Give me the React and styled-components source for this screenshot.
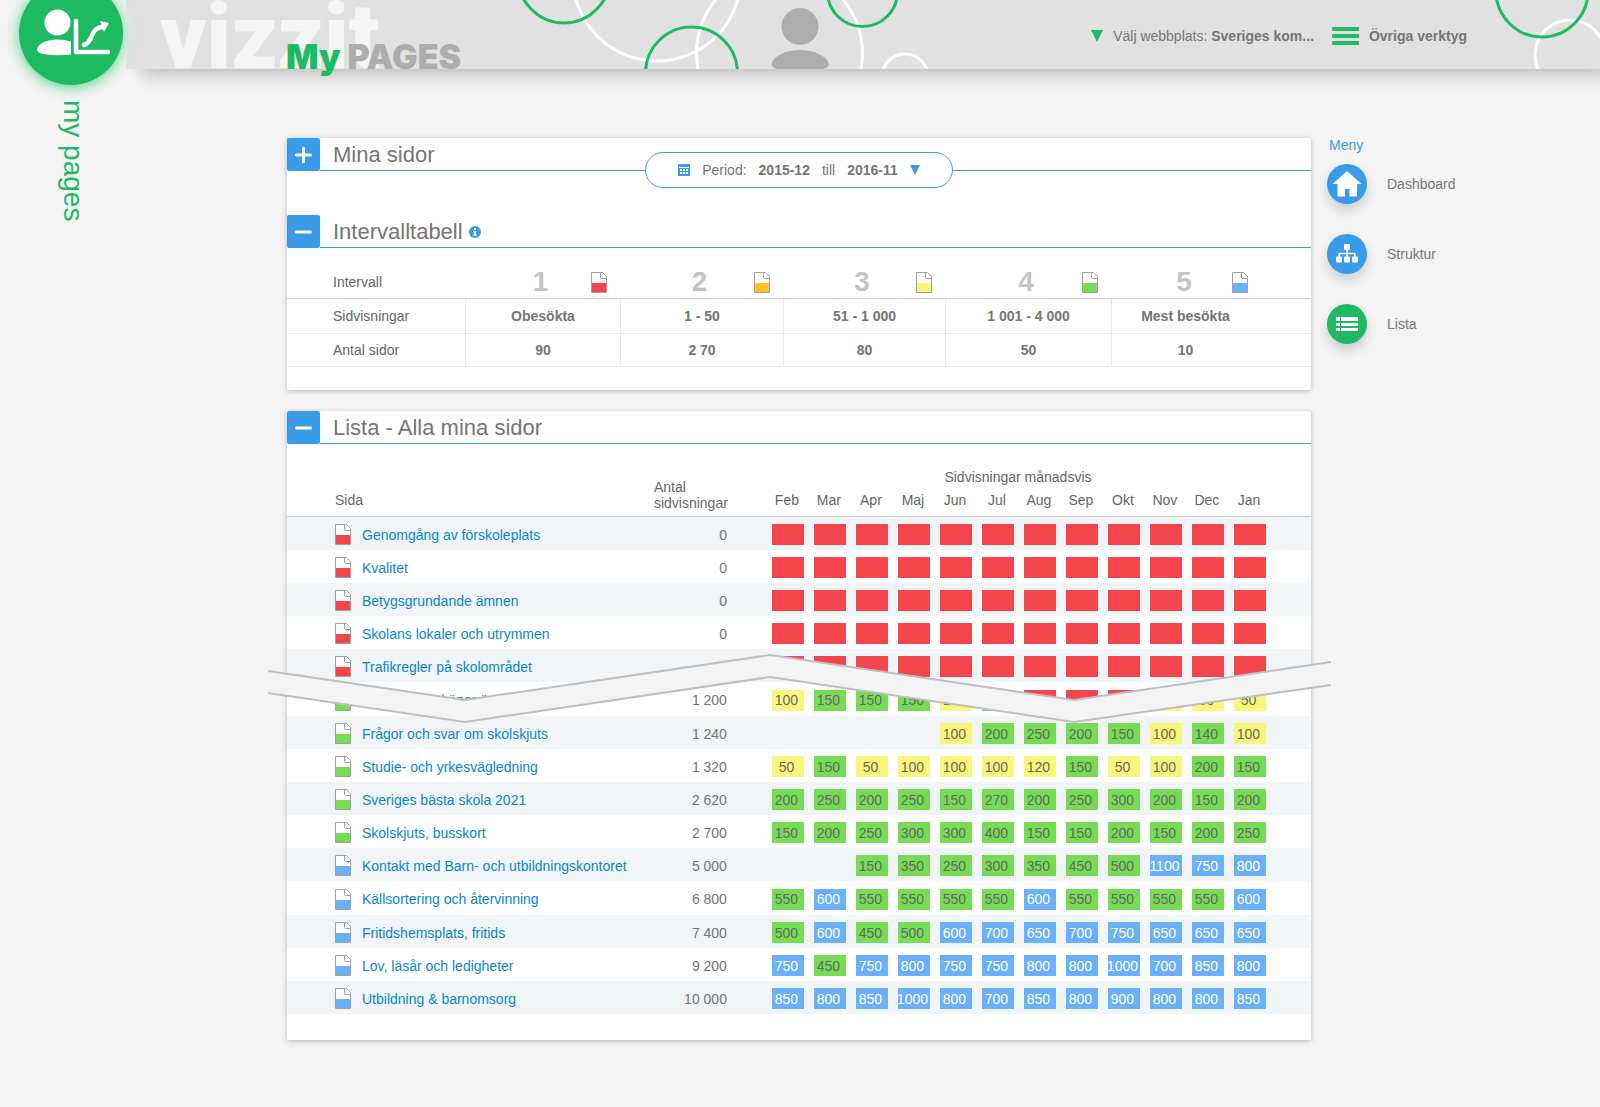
import React, { useState } from "react";
import styled, { createGlobalStyle } from "styled-components";

const GlobalStyle = createGlobalStyle`
  * {
    box-sizing: border-box;
  }
  body {
    margin: 0;
    background: #f4f4f4;
    color: #757575;
    font-family: "Liberation Sans", Arial, sans-serif;
    font-size: 14px;
    line-height: 16px;
  }
  button {
    padding: 0;
    border: 0;
    background: none;
    color: inherit;
    font: inherit;
    cursor: pointer;
  }
  a {
    color: inherit;
    text-decoration: none;
  }
  h1, h2, p {
    margin: 0;
  }
  svg {
    display: block;
  }
`;

const levels = {
  red: "#f5454c",
  orange: "#ffbd26",
  yellow: "#fbf67b",
  green: "#76dc54",
  blue: "#6ab0fa",
};

const Page = styled.div`
  display: grid;
  grid-template-columns: 142px minmax(0, 1fr);
  min-height: 100vh;
  align-content: start;
`;

const Rail = styled.aside`
  grid-column: 1;
  grid-row: 1 / 3;
  position: relative;
  z-index: 2;
  display: flex;
  flex-direction: column;
  align-items: center;
  margin-top: -19px;
  gap: 15px;
`;

const Badge = styled.a`
  display: flex;
  width: 104px;
  height: 104px;
  border-radius: 50%;
  background: #1dba62;
  box-shadow: 0 2px 14px rgba(29, 200, 100, 0.75), 0 0 6px 8px #f4f4f4;
`;

const RailLabel = styled.span`
  writing-mode: vertical-rl;
  padding-left: 3px;
  color: #1dba62;
  font-size: 28px;
  line-height: 32px;
`;

const Header = styled.header`
  grid-column: 1 / 3;
  grid-row: 1;
  position: relative;
  display: flex;
  justify-content: space-between;
  height: 69px;
  margin-left: 126px;
  padding: 0 133px 0 34px;
  background: #e1e1e1;
  box-shadow: 16px 8px 16px rgba(0, 0, 0, 0.17), 4px 8px 16px -8px rgba(0, 0, 0, 0.08);
`;

const HeaderArt = styled.svg`
  position: absolute;
  top: 0;
  right: 0;
  width: 100vw;
  height: 69px;
  pointer-events: none;
`;

const Brand = styled.div`
  position: relative;
  display: grid;
`;

const Logo = styled.span`
  position: absolute;
  bottom: 0;
  left: 0;
  color: #f5f5f5;
  font-family: Roboto, "Liberation Sans", sans-serif;
  font-size: 90px;
  font-weight: 900;
  line-height: 62px;
`;

const Title = styled.h1`
  position: relative;
  padding: 35px 0 0 126px;
  color: #adadad;
  font-family: Inter, "Liberation Sans", sans-serif;
  font-size: 34px;
  font-weight: 900;
  line-height: 44px;

  span {
    color: #1dba62;
  }
`;

const Tools = styled.nav`
  position: relative;
  display: flex;
  align-items: center;
  gap: 18px;
  padding-top: 3px;
`;

const Tool = styled.button`
  display: flex;
  align-items: center;
  gap: 10px;
  white-space: pre;
`;

const Content = styled.div`
  grid-column: 2;
  grid-row: 2;
  display: grid;
  grid-template-columns: minmax(0, 1fr) 289px;
  padding: 69px 0 64px 145px;
`;

const Panels = styled.main`
  display: flex;
  flex-direction: column;
  gap: 21px;
`;

const Panel = styled.section`
  position: relative;
  padding-bottom: 23px;
  border-radius: 2px;
  background: #fff;
  box-shadow: 0 1px 5px rgba(0, 0, 0, 0.25);
`;

const Section = styled.div`
  position: relative;
  margin-bottom: ${(props) => props.$gap || 0}px;
`;

const SectionBar = styled.div`
  display: flex;
  align-items: stretch;
  height: 33px;

  h2 {
    display: flex;
    flex: 1;
    align-items: center;
    gap: 6px;
    padding-top: 2px;
    padding-left: 13px;
    border-bottom: 1px solid #3a9be8;
    font-size: 22px;
    font-weight: 400;
    line-height: 26px;
  }
`;

const Expander = styled.button`
  display: grid;
  place-items: center;
  width: 33px;
  height: 33px;
  border-radius: 2px;
  background: #3a9be8;
`;

const PeriodRow = styled.div`
  position: absolute;
  top: 14px;
  right: 0;
  left: 0;
  display: flex;
  justify-content: center;
`;

const Period = styled.button`
  display: flex;
  align-items: center;
  gap: 12px;
  height: 36px;
  padding: 0 32px;
  border: 1px solid #3a9be8;
  border-radius: 18px;
  background: #fff;
`;

const Table = styled.table`
  width: 100%;
  table-layout: fixed;
  border-collapse: separate;
  border-spacing: 0;

  th,
  td {
    padding: 0;
  }
`;

const IntervalHead = styled.th`
  height: 51px;
  border-bottom: 1px solid #ccc;
  color: #666;
  font-weight: 400;
  text-align: left;
  padding-top: 18px !important;

  &:first-child {
    padding-left: 46px;
  }
  &:last-child {
    padding-right: 50px;
  }
`;

const IntervalMark = styled.div`
  display: grid;
  grid-template-columns: 1fr auto 1fr;
  align-items: center;
  padding-right: 13px;
  padding-left: 9px;
  color: #c4c4c4;
  font-size: 28px;
  font-weight: 700;
  line-height: 32px;

  b {
    grid-column: 2;
  }
  svg {
    justify-self: end;
  }
`;

const IntervalRow = styled.tr`
  height: ${(props) => props.$height}px;

  th,
  td {
    border-bottom: 1px solid #ebebeb;
  }
  th {
    padding-left: 46px;
    color: #666;
    font-weight: 400;
    text-align: left;
  }
  td {
    border-left: 1px solid #ebebeb;
    font-weight: 700;
    text-align: center;
  }
  td:last-child {
    padding-right: 52px;
  }
`;

const ListWrap = styled.div`
  position: relative;
  padding-bottom: 3px;
`;

const ListHead = styled.thead`
  color: #666;

  th {
    font-weight: 400;
    text-align: left;
    vertical-align: bottom;
  }
  tr:last-child th,
  th[rowspan] {
    border-bottom: 1px solid #ccc;
  }
  th[rowspan] {
    padding-bottom: 5px;
  }
  th[rowspan]:first-child {
    padding: 0 0 8px 48px;
  }
  tr:first-child {
    height: 48px;
  }
  tr:last-child {
    height: 25px;
  }
`;

const Months = styled.th`
  padding: 0 42px 7px 0 !important;
  text-align: center !important;
`;

const Month = styled.th`
  padding: 0 2px 8px 0 !important;
  text-align: center !important;

  &:last-child {
    padding-right: 42px !important;
  }
`;

const ListBody = styled.tbody`
  tr {
    height: 33px;
  }
  tr:nth-child(6n) {
    height: 34px;
  }
  tr:nth-child(odd) {
    background: #f1f5f8;
  }
  th,
  td {
    padding-top: 2px;
  }
  th {
    padding-left: 48px;
    color: #0787cc;
    font-weight: 400;
    text-align: left;
  }
`;

const PageLink = styled.a`
  display: flex;
  align-items: center;
  gap: 11px;
  white-space: nowrap;

  &:hover span {
    text-decoration: underline;
  }
`;

const Total = styled.td`
  padding-right: 40px !important;
  text-align: right;
`;

const ChipCell = styled.td`
  padding-left: 5px !important;
`;

const Chip = styled.span`
  display: flex;
  align-items: center;
  justify-content: center;
  width: 32px;
  height: 21px;
  padding-right: 3px;
  background: ${(props) => levels[props.$level]};
  color: ${(props) => (props.$level === "blue" ? "#fff" : "#666")};
`;

const Tear = styled.svg`
  position: absolute;
  top: 210px;
  left: -19px;
  width: calc(100% + 39px);
  height: 70px;
`;

const Menu = styled.nav`
  display: flex;
  flex-direction: column;
  align-items: flex-start;
  gap: 30px;
  padding-left: 16px;

  p {
    margin: -1px 0 -19px 2px;
    color: #3a9be8;
  }
`;

const MenuLink = styled.a`
  display: flex;
  align-items: center;
  gap: 20px;
`;

const Round = styled.span`
  display: grid;
  place-items: center;
  width: 40px;
  height: 40px;
  border-radius: 50%;
  background: ${(props) => (props.$active ? "#1dba62" : "#3a9be8")};
  box-shadow: 0 6px 12px rgba(0, 0, 0, 0.16);
`;

const FileIcon = ({ level }) => (
  <svg width="16" height="21" viewBox="0 0 16 21" fill="none">
    <path d="M.5 .5H11L15.500 5V20.500H.5Z" fill="#fff" />
    <path d="M1 11H15V20H1Z" fill={levels[level]} />
    <path
      d="M1 .5H11.500L15.500 4.500V20.500H.5V.5ZM9.500 .5V5.500Q9.500 6.500 10.500 6.500H15.500"
      stroke="#a0a0a0"
    />
  </svg>
);

const Triangle = ({ color, size }) => (
  <svg width={size} height={size} viewBox="0 0 12 12">
    <path d="M0 0H12L6 12Z" fill={color} />
  </svg>
);

const InfoIcon = () => (
  <svg width="12" height="12" viewBox="0 0 12 12">
    <circle cx="6" cy="6" r="6" fill="#3a9be8" />
    <path d="M5 2H7V4H5ZM4 5H7V8.500H8V9.700H4V8.500H5V6.200H4Z" fill="#fff" />
  </svg>
);

const CalendarIcon = () => (
  <svg width="12" height="12" viewBox="0 0 12 12">
    <path d="M0 0H12V12H0Z" fill="#3a9be8" />
    <path
      d="M2 5h2v2H2zM5 5h2v2H5zM8 5h2v2H8zM2 8h2v2H2zM5 8h2v2H5zM8 8h2v2H8z"
      fill="#fff"
    />
    <path d="M1 3.500H11" stroke="#fff" strokeWidth="1" />
  </svg>
);

const UserChartIcon = () => (
  <svg width="104" height="104" viewBox="19 -19 104 104">
    <circle cx="57.500" cy="22.500" r="13" fill="#fff" />
    <path
      d="M71 41.500V54.500Q64 55.200 57 55.200Q37 55 37 49.500C38 43 48 39.500 57 39.500Q65 39.500 71 41.500Z"
      fill="#fff"
    />
    <path
      d="M76 21V52H108"
      fill="none"
      stroke="#fff"
      strokeWidth="4.500"
      strokeLinecap="round"
      strokeLinejoin="round"
    />
    <path
      d="M84 45C94 42 89 29 102 27"
      fill="none"
      stroke="#fff"
      strokeWidth="4.500"
      strokeLinecap="round"
    />
    <path d="M100 21L109 23L104 32Z" fill="#fff" />
  </svg>
);

const HomeIcon = () => (
  <svg width="30" height="26" viewBox="0 0 30 26">
    <path
      d="M15 0L29.500 13H25V25.500H17.500V18H13V25.500H5.500V13H.5Z"
      fill="#fff"
    />
  </svg>
);

const TreeIcon = () => (
  <svg width="22" height="20" viewBox="0 0 22 20">
    <path d="M11 5V13M3.200 13V9.500H18.800V13" fill="none" stroke="#fff" strokeWidth="1.600" />
    <rect x="8" y="0" width="6" height="6" rx="1" fill="#fff" />
    <rect x="0" y="12.500" width="6" height="6" rx="1" fill="#fff" />
    <rect x="8" y="12.500" width="6" height="6" rx="1" fill="#fff" />
    <rect x="16" y="12.500" width="6" height="6" rx="1" fill="#fff" />
  </svg>
);

const ListIcon = () => (
  <svg width="22" height="14" viewBox="0 0 22 14">
    <path
      d="M0 0h4v4H0zM5 0h17v4H5zM0 6h4v3H0zM5 6h17v3H5zM0 11h4v3H0zM5 11h17v3H5z"
      fill="#fff"
    />
  </svg>
);

const BarsIcon = () => (
  <svg width="27" height="18" viewBox="0 0 27 18">
    <rect width="27" height="4" rx="1" fill="#1dba62" />
    <rect y="7" width="27" height="4" rx="1" fill="#1dba62" />
    <rect y="14" width="27" height="4" rx="1" fill="#1dba62" />
  </svg>
);

const ExpandIcon = ({ open }) => (
  <svg width="17" height="17" viewBox="0 0 17 17">
    <path
      d={open ? "M1.500 9H15.500" : "M1.500 9H15.500M8.500 2V16"}
      stroke="#fff"
      strokeWidth="3"
      strokeLinecap="round"
    />
  </svg>
);

const intervals = [
  { views: "Obesökta", pages: "90", level: "red" },
  { views: "1 - 50", pages: "2 70", level: "orange" },
  { views: "51 - 1 000", pages: "80", level: "yellow" },
  { views: "1 001 - 4 000", pages: "50", level: "green" },
  { views: "Mest besökta", pages: "10", level: "blue" },
];

const months = [
  "Feb", "Mar", "Apr", "Maj", "Jun", "Jul",
  "Aug", "Sep", "Okt", "Nov", "Dec", "Jan",
];

const none = Array(12).fill(0);

const pages = [
  ["red", "Genomgång av förskoleplats", "0", none],
  ["red", "Kvalitet", "0", none],
  ["red", "Betygsgrundande ämnen", "0", none],
  ["red", "Skolans lokaler och utrymmen", "0", none],
  ["red", "Trafikregler på skolområdet", "0", none],
  ["green", "Grundskola, köper än", "1 200", [100, 150, 150, 150, 100, 150, 0, 0, 0, 50, 60, 50]],
  ["green", "Frågor och svar om skolskjuts", "1 240", [null, null, null, null, 100, 200, 250, 200, 150, 100, 140, 100]],
  ["green", "Studie- och yrkesvägledning", "1 320", [50, 150, 50, 100, 100, 100, 120, 150, 50, 100, 200, 150]],
  ["green", "Sveriges bästa skola 2021", "2 620", [200, 250, 200, 250, 150, 270, 200, 250, 300, 200, 150, 200]],
  ["green", "Skolskjuts, busskort", "2 700", [150, 200, 250, 300, 300, 400, 150, 150, 200, 150, 200, 250]],
  ["blue", "Kontakt med Barn- och utbildningskontoret", "5 000", [null, null, 150, 350, 250, 300, 350, 450, 500, 1100, 750, 800]],
  ["blue", "Källsortering och återvinning", "6 800", [550, 600, 550, 550, 550, 550, 600, 550, 550, 550, 550, 600]],
  ["blue", "Fritidshemsplats, fritids", "7 400", [500, 600, 450, 500, 600, 700, 650, 700, 750, 650, 650, 650]],
  ["blue", "Lov, läsår och ledigheter", "9 200", [750, 450, 750, 800, 750, 750, 800, 800, 1000, 700, 850, 800]],
  ["blue", "Utbildning & barnomsorg", "10 000", [850, 800, 850, 1000, 800, 700, 850, 800, 900, 800, 800, 850]],
];

function levelOf(value) {
  if (value === 0) return "red";
  if (value <= 120) return "yellow";
  if (value < 600) return "green";
  return "blue";
}

function SectionHeader(props) {
  return (
    <SectionBar>
      <Expander
        aria-label={props.title}
        aria-expanded={props.open}
        onClick={props.onToggle}
      >
        <ExpandIcon open={props.open} />
      </Expander>
      <h2>
        {props.title}
        {props.info && <InfoIcon />}
      </h2>
    </SectionBar>
  );
}

function IntervalTable() {
  return (
    <Table>
      <colgroup>
        <col style={{ width: 178 }} />
        <col style={{ width: 155 }} />
        <col style={{ width: 163 }} />
        <col style={{ width: 162 }} />
        <col style={{ width: 166 }} />
        <col />
      </colgroup>
      <thead>
        <tr>
          <IntervalHead scope="col">Intervall</IntervalHead>
          {intervals.map((item, i) => (
            <IntervalHead scope="col" key={item.level}>
              <IntervalMark>
                <b>{i + 1}</b>
                <FileIcon level={item.level} />
              </IntervalMark>
            </IntervalHead>
          ))}
        </tr>
      </thead>
      <tbody>
        <IntervalRow $height={35}>
          <th scope="row">Sidvisningar</th>
          {intervals.map((item) => (
            <td key={item.level}>{item.views}</td>
          ))}
        </IntervalRow>
        <IntervalRow $height={33}>
          <th scope="row">Antal sidor</th>
          {intervals.map((item) => (
            <td key={item.level}>{item.pages}</td>
          ))}
        </IntervalRow>
      </tbody>
    </Table>
  );
}

function PageTable() {
  return (
    <ListWrap>
      <Table>
        <colgroup>
          <col />
          <col style={{ width: 113 }} />
          {months.map((month, i) => (
            <col key={month} style={{ width: i === 11 ? 82 : 42 }} />
          ))}
        </colgroup>
        <ListHead>
          <tr>
            <th rowSpan={2} scope="col">Sida</th>
            <th rowSpan={2} scope="col">
              Antal
              <br />
              sidvisningar
            </th>
            <Months colSpan={12} scope="colgroup">Sidvisningar månadsvis</Months>
          </tr>
          <tr>
            {months.map((month) => (
              <Month scope="col" key={month}>{month}</Month>
            ))}
          </tr>
        </ListHead>
        <ListBody>
          {pages.map(([level, name, total, values]) => (
            <tr key={name}>
              <th scope="row">
                <PageLink href="#">
                  <FileIcon level={level} />
                  <span>{name}</span>
                </PageLink>
              </th>
              <Total>{total}</Total>
              {values.map((value, i) => (
                <ChipCell key={months[i]}>
                  {value !== null && (
                    <Chip $level={levelOf(value)}>{value || ""}</Chip>
                  )}
                </ChipCell>
              ))}
            </tr>
          ))}
        </ListBody>
      </Table>
      {/* torn strip over the rows that are left out */}
      <Tear viewBox="0 0 1063 70" preserveAspectRatio="none">
        <path
          d="M0 17L197 46L502 1L806 46L1063 8V31L806 68L502 23L197 68L0 39Z"
          fill="#f4f4f4"
        />
        <path
          d="M0 17L197 46L502 1L806 46L1063 8M0 39L197 68L502 23L806 68L1063 31"
          fill="none"
          stroke="#bfbfbf"
          strokeWidth="2"
        />
      </Tear>
    </ListWrap>
  );
}

function App() {
  const [open, setOpen] = useState({ mine: false, interval: true, list: true });

  const toggle = (key) => {
    setOpen({ ...open, [key]: !open[key] });
  };

  return (
    <>
      <GlobalStyle />
      <Page>
        <Rail>
          <Badge href="#" aria-label="my pages">
            <UserChartIcon />
          </Badge>
          <RailLabel>my pages</RailLabel>
        </Rail>

        <Header>
          <HeaderArt viewBox="0 0 1600 69" preserveAspectRatio="xMidYMin slice" fill="none">
            <g stroke="#fff" strokeWidth="3">
              <circle cx="657" cy="-23" r="84" />
              <circle cx="779.500" cy="53" r="83" />
              <circle cx="905" cy="77" r="23" />
              <circle cx="1570" cy="55" r="35" />
            </g>
            <g stroke="#1dba62" strokeWidth="3">
              <circle cx="564" cy="-23" r="46" />
              <circle cx="691.500" cy="73" r="46" />
              <circle cx="862.500" cy="-8.500" r="35" />
              <circle cx="1542" cy="-9" r="46" />
            </g>
            <circle cx="800" cy="26.500" r="18.500" fill="#adadad" />
            <path
              d="M777 69Q771.500 68 771.500 64C774 55 787 50 800 50S826 55 829 64Q828.500 68 823 69Z"
              fill="#adadad"
            />
          </HeaderArt>
          <Brand>
            <Logo>vizzit</Logo>
            <Title>
              <span>My</span> PAGES
            </Title>
          </Brand>
          <Tools>
            <Tool>
              <Triangle color="#1dba62" size={12} />
              <span>
                Välj webbplats: <b>Sveriges kom...</b>
              </span>
            </Tool>
            <Tool>
              <BarsIcon />
              <b>Övriga verktyg</b>
            </Tool>
          </Tools>
        </Header>

        <Content>
          <Panels>
            <Panel>
              <Section $gap={44}>
                <SectionHeader
                  title="Mina sidor"
                  open={open.mine}
                  onToggle={() => toggle("mine")}
                />
                <PeriodRow>
                  <Period>
                    <CalendarIcon />
                    <span>Period:</span>
                    <b>2015-12</b>
                    <span>till</span>
                    <b>2016-11</b>
                    <Triangle color="#3a9be8" size={10} />
                  </Period>
                </PeriodRow>
              </Section>
              <SectionHeader
                title="Intervalltabell"
                info
                open={open.interval}
                onToggle={() => toggle("interval")}
              />
              {open.interval && <IntervalTable />}
            </Panel>

            <Panel>
              <SectionHeader
                title="Lista - Alla mina sidor"
                open={open.list}
                onToggle={() => toggle("list")}
              />
              {open.list && <PageTable />}
            </Panel>
          </Panels>

          <Menu>
            <p>Meny</p>
            <MenuLink href="#">
              <Round>
                <HomeIcon />
              </Round>
              Dashboard
            </MenuLink>
            <MenuLink href="#">
              <Round>
                <TreeIcon />
              </Round>
              Struktur
            </MenuLink>
            <MenuLink href="#">
              <Round $active>
                <ListIcon />
              </Round>
              Lista
            </MenuLink>
          </Menu>
        </Content>
      </Page>
    </>
  );
}

export default App;
